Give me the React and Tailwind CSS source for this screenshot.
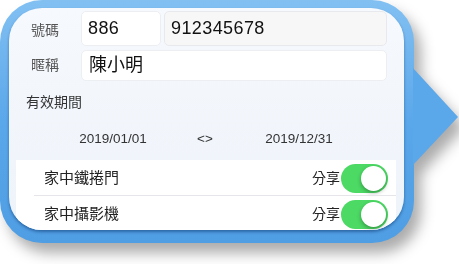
import { useState } from "react";

function Toggle({ on }) {
  return (
    <div
      className={`w-[47px] h-[29px] rounded-full p-[2px] flex ${
        on ? "bg-[#4cd964] justify-end" : "bg-[#e5e5ea] justify-start"
      }`}
    >
      <div className="w-[25px] h-[25px] rounded-full bg-white shadow-[0_2px_4px_rgba(0,0,0,0.3)]" />
    </div>
  );
}

function DeviceRow({ name, last }) {
  return (
    <div className="h-[36px] flex items-center pl-[28px] pr-[8px] relative">
      <span className="flex-1 text-[15px] text-[#222]">{name}</span>
      <span className="text-[14px] text-[#222] mr-[1px]">分享</span>
      <Toggle on />
      {!last && (
        <div className="absolute left-[18px] right-0 bottom-0 h-px bg-[#e6e6ea]" />
      )}
    </div>
  );
}

export default function App() {
  const [devices] = useState(["家中鐵捲門", "家中攝影機"]);

  return (
    <div
      className="w-[459px] h-[264px] bg-white overflow-hidden"
      style={{ fontFamily: '"Liberation Sans", "Noto Sans CJK TC", sans-serif' }}
    >
      <div className="flex items-start drop-shadow-[7px_10px_7px_rgba(0,0,0,0.33)]">
        {/* Bubble frame */}
        <div className="w-[414px] h-[243px] rounded-[42px] bg-gradient-to-b from-[#82c0f2] via-[#5aa7ea] to-[#4f9de3] pt-[8px] pl-[9px] pr-[10px] pb-[13px]">
          <div className="w-full h-full rounded-[33px] overflow-hidden bg-gradient-to-b from-[#f6f9fd] to-[#eef3fa] shadow-[0_2px_3px_rgba(0,40,90,0.45)]">
            {/* Phone */}
            <div className="flex items-center h-[35px] mt-[3px]">
              <span className="w-[72px] text-center text-[14px] text-[#555] pt-[3px]">號碼</span>
              <div className="w-[80px] h-full rounded-[5px] bg-white flex items-center pl-[6px] text-[18px] tracking-[0.4px] text-[#111] border border-[#eceef2]">
                886
              </div>
              <div className="ml-[3px] w-[223px] h-full rounded-[5px] bg-[#f7f7f8] flex items-center pl-[6px] text-[18px] tracking-[0.4px] text-[#111] border border-[#e8e9ec]">
                912345678
              </div>
            </div>
            {/* Nickname */}
            <div className="flex items-center h-[31px] mt-[4px]">
              <span className="w-[72px] text-center text-[14px] text-[#555]">暱稱</span>
              <div className="w-[306px] h-full rounded-[5px] bg-white flex items-center pl-[7px] text-[18px] text-[#111] border border-[#eceef2]">
                陳小明
              </div>
            </div>
            {/* Validity */}
            <div className="pl-[17px] mt-[11px] h-[20px] flex items-center text-[14px] text-[#333]">
              有效期間
            </div>
            <div className="flex items-center h-[20px] mt-[17px] text-[13.5px] text-[#333]">
              <span className="ml-[40px] w-[128px] text-center">2019/01/01</span>
              <span className="ml-[8px] w-[40px] text-center">&lt;&gt;</span>
              <span className="ml-[10px] w-[128px] text-center">2019/12/31</span>
            </div>
            {/* Devices */}
            <div className="mt-[11px] ml-[7px] w-[380px] bg-white">
              {devices.map((d, i) => (
                <DeviceRow key={d} name={d} last={i === devices.length - 1} />
              ))}
            </div>
          </div>
        </div>
        {/* Pointer */}
        <svg width="46" height="98" viewBox="0 0 46 98" className="mt-[68px] -ml-[1px]">
          <polygon points="0,0 45,49 0,97" fill="#5aa7ea" />
        </svg>
      </div>
    </div>
  );
}
